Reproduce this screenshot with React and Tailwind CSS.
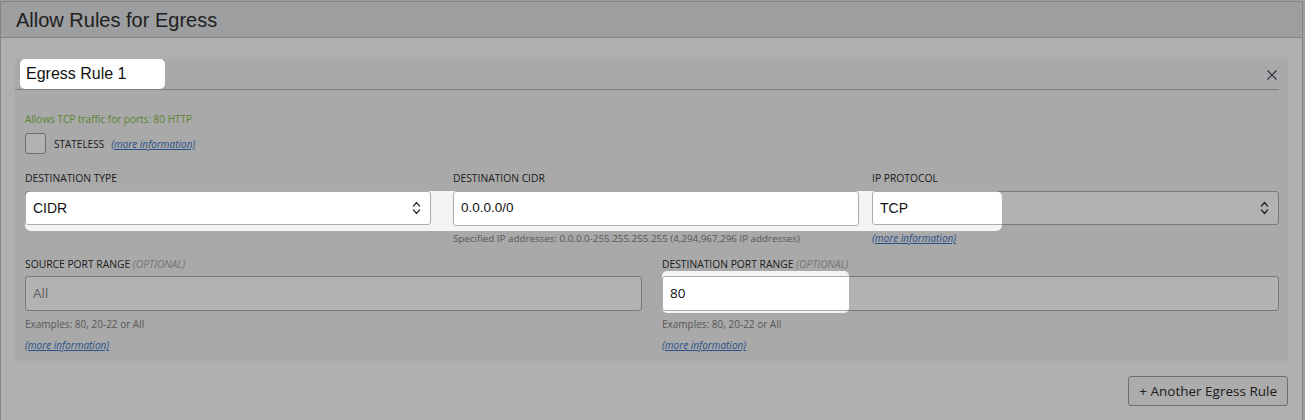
import React from 'react';

/* spotlight holes cut out of the dimming overlay */
const holes = [
  { x: 20, y: 59, w: 145, h: 30, r: 5 },
  { x: 25, y: 191, w: 977, h: 40, r: 6 },
  { x: 662, y: 271, w: 187, h: 42, r: 5 },
];

const rr = ({ x, y, w, h, r }) =>
  `M${x + r} ${y}H${x + w - r}A${r} ${r} 0 0 1 ${x + w} ${y + r}V${y + h - r}A${r} ${r} 0 0 1 ${x + w - r} ${y + h}H${x + r}A${r} ${r} 0 0 1 ${x} ${y + h - r}V${y + r}A${r} ${r} 0 0 1 ${x + r} ${y}Z`;

const ui = { fontFamily: "'Open Sans', 'Noto Sans', sans-serif" };
const arial = { fontFamily: "'Liberation Sans', Arial, sans-serif" };

const Chevrons = () => (
  <svg width="9" height="14" viewBox="0 0 9 14" fill="none" stroke="#333" strokeWidth="1.3" strokeLinecap="round" strokeLinejoin="round">
    <path d="M1.5 5 4.5 1.5 7.5 5" />
    <path d="M1.5 9 4.5 12.5 7.5 9" />
  </svg>
);

const Label = ({ children, optional }) => (
  <div className="text-[10.3px] leading-[14px] font-medium text-[#2b2b2b] uppercase" style={ui}>
    {children}
    {optional && <span className="italic font-normal text-[#a8a8a8]"> (Optional)</span>}
  </div>
);

const MoreInfo = ({ className = '' }) => (
  <a className={`italic underline text-[10px] leading-[14px] text-[#3a74c4] ${className}`} style={ui}>
    (more information)
  </a>
);

const Helper = ({ children, className = '' }) => (
  <div className={`leading-[14px] text-[#7e7e7e] ${className}`} style={ui}>
    {children}
  </div>
);

const Select = ({ value }) => (
  <div className="mt-[6px] h-[34px] flex items-center justify-between pl-[7px] pr-[9px] bg-white border border-[#adadad] rounded-[3px]">
    <span className="text-[14px] text-[#111]" style={arial}>{value}</span>
    <Chevrons />
  </div>
);

const TextBox = ({ value, placeholder, font = ui }) => (
  <div className="h-[35px] flex items-center pl-[7px] bg-white border border-[#acacac] rounded-[3px]">
    <span className={`text-[13.5px] ${placeholder ? 'text-[#8a8a8a]' : 'text-[#111]'}`} style={font}>{value}</span>
  </div>
);

export default function App() {
  return (
    <div className="relative w-[1305px] h-[420px] overflow-hidden bg-[#e0e2e5] pt-px">
      <div className="w-[1303px] h-[419px] border-l border-r border-t border-[#bfbfbf] bg-[#fbfbfb] flex flex-col">
        {/* header */}
        <div className="h-[36px] flex items-center pl-[15px] bg-[#e0e2e5] border-b border-[#bfbfbf]">
          <h1 className="text-[20px] leading-none text-[#2f2f2f]" style={arial}>Allow Rules for Egress</h1>
        </div>

        <div className="pt-[21px] pl-[14px] pr-[14px] flex flex-col">
          {/* rule card */}
          <div className="bg-[#f3f3f3] pb-[9px]">
            <div className="mr-[9px] h-[31px] flex items-start justify-between border-b border-[#b7b7b7]">
              <div className="ml-[5px] w-[145px] h-[30px] flex items-center pl-[6px] bg-white rounded-[5px]">
                <span className="text-[16px] text-[#111]" style={arial}>Egress Rule 1</span>
              </div>
              <svg className="mt-[11px] mr-[2px]" width="10" height="10" viewBox="0 0 10 10" stroke="#3d4656" strokeWidth="1.2">
                <path d="M0.5 0.5 9.5 9.5M9.5 0.5 0.5 9.5" />
              </svg>
            </div>

            <div className="pl-[10px] pr-[9px]">
              <div className="mt-[22px] text-[10px] leading-[14px] text-[#84bd44]" style={ui}>
                Allows TCP traffic for ports: 80 HTTP
              </div>
              <div className="mt-[7px] flex items-center">
                <div className="w-[21px] h-[21px] bg-white border border-[#9d9d9d] rounded-[3px]" />
                <span className="ml-[8px] text-[10px] leading-[14px] font-medium text-[#2b2b2b]" style={ui}>STATELESS</span>
                <MoreInfo className="ml-[7px]" />
              </div>

              {/* row 1 */}
              <div className="mt-[17px] flex">
                <div className="w-[406px]">
                  <Label>Destination Type</Label>
                  <Select value="CIDR" />
                </div>
                <div className="ml-[22px] w-[406px]">
                  <Label>Destination CIDR</Label>
                  <div className="mt-[6px]">
                    <TextBox value="0.0.0.0/0" font={arial} />
                  </div>
                  <Helper className="mt-[6px] text-[9.8px]">
                    Specified IP addresses: 0.0.0.0-255.255.255.255 (4,294,967,296 IP addresses)
                  </Helper>
                </div>
                <div className="ml-[13px] flex-1">
                  <Label>IP Protocol</Label>
                  <Select value="TCP" />
                  <MoreInfo className="block mt-[6px]" />
                </div>
              </div>

              {/* row 2 */}
              <div className="mt-[11px] flex gap-[20px]">
                <div className="w-[617px]">
                  <Label optional>Source Port Range</Label>
                  <div className="mt-[5px]">
                    <TextBox value="All" placeholder />
                  </div>
                  <Helper className="mt-[6px] text-[10px]">Examples: 80, 20-22 or All</Helper>
                  <MoreInfo className="block mt-[7px]" />
                </div>
                <div className="flex-1">
                  <Label optional>Destination Port Range</Label>
                  <div className="mt-[5px]">
                    <TextBox value="80" />
                  </div>
                  <Helper className="mt-[6px] text-[10px]">Examples: 80, 20-22 or All</Helper>
                  <MoreInfo className="block mt-[7px]" />
                </div>
              </div>
            </div>
          </div>

          <div className="mt-[15px] flex justify-end">
            <button className="h-[30px] px-[10px] bg-[#f7f7f7] border border-[#9f9f9f] rounded-[3px] text-[13.5px] text-[#2b2b2b]" style={ui}>
              + Another Egress Rule
            </button>
          </div>
        </div>
      </div>

      {/* dimming overlay with spotlights */}
      <svg className="absolute inset-0 pointer-events-none" width="1305" height="420" viewBox="0 0 1305 420">
        <path fillRule="evenodd" fill="rgba(0,0,0,0.3)" d={`M0 0H1305V420H0Z${holes.map(rr).join('')}`} />
      </svg>
    </div>
  );
}
